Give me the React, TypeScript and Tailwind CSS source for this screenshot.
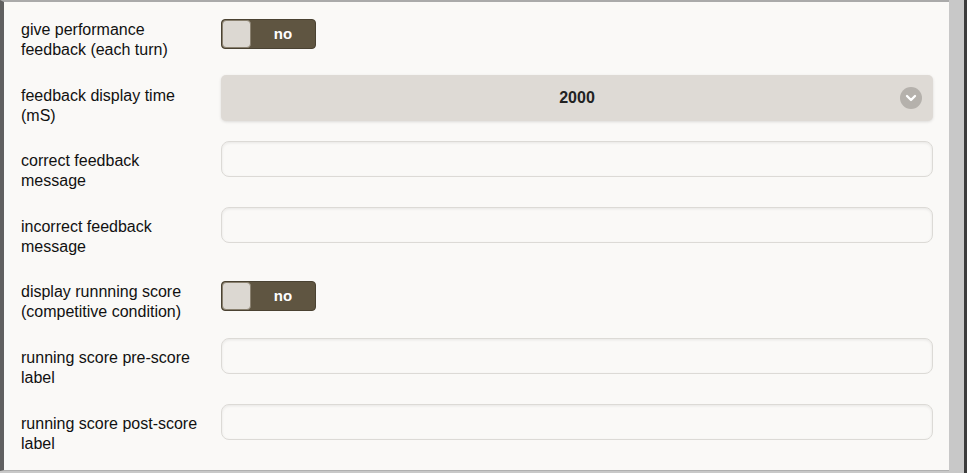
import { ChevronDown } from "lucide-react";

type Row =
  | { label: string[]; kind: "toggle" }
  | { label: string[]; kind: "select"; value: string }
  | { label: string[]; kind: "input" };

const rows: Row[] = [
  { label: ["give performance", "feedback (each turn)"], kind: "toggle" },
  { label: ["feedback display time", "(mS)"], kind: "select", value: "2000" },
  { label: ["correct feedback", "message"], kind: "input" },
  { label: ["incorrect feedback", "message"], kind: "input" },
  { label: ["display runnning score", "(competitive condition)"], kind: "toggle" },
  { label: ["running score pre-score", "label"], kind: "input" },
  { label: ["running score post-score", "label"], kind: "input" },
];

function Toggle() {
  return (
    <div className="relative w-[95px] h-[30px] rounded-[4px] bg-[#5f5541] border border-[#4a4232] flex items-center">
      <div className="absolute left-0 top-0 w-[29px] h-[28px] rounded-[4px] bg-[#dcd8d2] border border-[#8a8170]" />
      <span className="ml-[29px] flex-1 text-center text-white font-bold text-[15px]">no</span>
    </div>
  );
}

function Select({ value }: { value: string }) {
  return (
    <div className="h-[46px] rounded-[5px] bg-[#dedad5] shadow-[0_1px_3px_rgba(0,0,0,0.12)] flex items-center relative">
      <span className="flex-1 text-center font-bold text-[16px] text-[#222]">{value}</span>
      <div className="absolute right-[11px] top-[12px] w-[22px] h-[22px] rounded-full bg-[#b5b1ac] flex items-center justify-center">
        <ChevronDown size={16} strokeWidth={3.5} color="white" className="mt-[1px]" />
      </div>
    </div>
  );
}

function TextInput() {
  return (
    <div className="h-[36px] rounded-[8px] border border-[#dcdad6] bg-[#faf9f7] shadow-[inset_0_1px_3px_rgba(0,0,0,0.08)]" />
  );
}

export default function App() {
  return (
    <div className="w-[971px] h-[473px] bg-white pr-[4px] font-['Liberation_Sans',Arial,sans-serif]">
      <div className="h-full bg-[#3c3c3c] pr-[3px]">
        <div className="h-full bg-[#c8c8c8] pr-[15px]">
          <div className="h-[471px] bg-[#faf9f7] border-l-4 border-l-[#606060] border-t-2 border-t-[#aaaaaa] border-b border-b-[#b0b0b0] pl-[17px] pr-[16px] pt-[17px] overflow-hidden">
            {rows.map((r, i) => (
              <div key={i} className={`flex items-start ${i < rows.length - 1 ? "h-[65.6px]" : "h-[40px]"}`}>
                <div className="w-[200px] shrink-0 text-[16px] leading-[20px] text-[#111] pt-[1px]">
                  {r.label.map((l, j) => (
                    <div key={j}>{l}</div>
                  ))}
                </div>
                <div className="flex-1">
                  {r.kind === "toggle" && <Toggle />}
                  {r.kind === "select" && (
                    <div className="-mt-[10px]">
                      <Select value={r.value} />
                    </div>
                  )}
                  {r.kind === "input" && (
                    <div className="-mt-[9px]">
                      <TextInput />
                    </div>
                  )}
                </div>
              </div>
            ))}
          </div>
        </div>
      </div>
    </div>
  );
}
